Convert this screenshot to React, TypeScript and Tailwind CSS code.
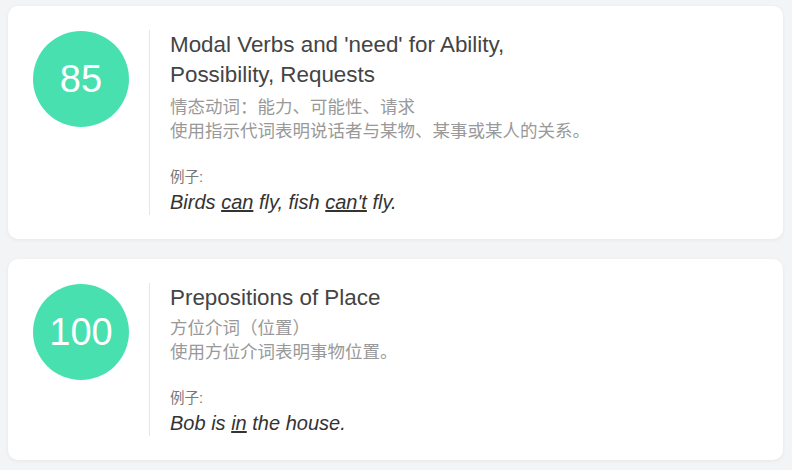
import React from "react";

const font = { fontFamily: '"Liberation Sans", Arial, "Noto Sans CJK SC", sans-serif' };

function Card({
  score,
  title,
  sub,
  example,
  tall,
}: {
  score: string;
  title: React.ReactNode;
  sub: React.ReactNode;
  example: React.ReactNode;
  tall?: boolean;
}) {
  return (
    <div className="flex rounded-[10px] bg-white shadow-[0_1px_4px_rgba(0,0,0,0.06)] pl-[25px] pt-[24px] pb-[24px]">
      <div className="w-[96px] shrink-0 pt-[1px]">
        <div className="w-[96px] h-[96px] rounded-full bg-[#48e0ae] flex items-center justify-center text-white text-[38px] leading-none">
          {score}
        </div>
      </div>
      <div className="ml-[20px] w-px bg-[#e6e6e6]" />
      <div className="ml-[20px] flex flex-col">
        <div className="text-[22.4px] leading-[30px] text-[#444]">{title}</div>
        <div className={`${tall ? "mt-[6px]" : "mt-[4px]"} text-[17.5px] leading-[23.5px] text-[#999]`}>{sub}</div>
        <div className="mt-[24px] text-[14.5px] leading-[20px] text-[#777]">例子:</div>
        <div className="mt-[2px] text-[20px] leading-[26px] italic text-[#333]">{example}</div>
      </div>
    </div>
  );
}

export default function App() {
  return (
    <div className="w-[792px] h-[470px] bg-[#f3f4f5] pl-[8px] pr-[9px] pt-[6px] flex flex-col gap-[20px]" style={font}>
      <Card
        score="85"
        tall
        title={
          <>
            Modal Verbs and 'need' for Ability,
            <br />
            Possibility, Requests
          </>
        }
        sub={
          <>
            情态动词：能力、可能性、请求
            <br />
            使用指示代词表明说话者与某物、某事或某人的关系。
          </>
        }
        example={
          <>
            Birds <span className="underline">can</span> fly, fish <span className="underline">can't</span> fly.
          </>
        }
      />
      <Card
        score="100"
        title="Prepositions of Place"
        sub={
          <>
            方位介词（位置）
            <br />
            使用方位介词表明事物位置。
          </>
        }
        example={
          <>
            Bob is <span className="underline">in</span> the house.
          </>
        }
      />
    </div>
  );
}
